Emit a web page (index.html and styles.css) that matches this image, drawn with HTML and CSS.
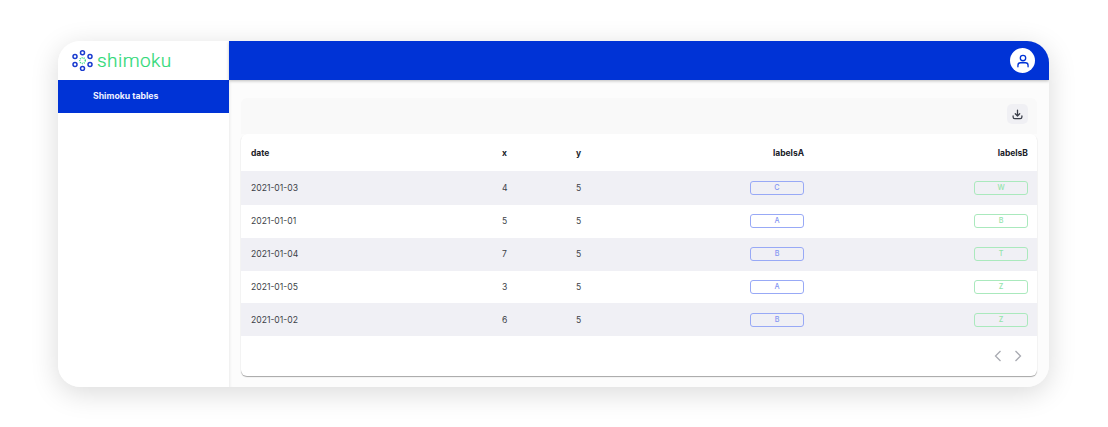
FILE: index.html
```html
<!DOCTYPE html>
<html lang="en">
<head>
<meta charset="utf-8">
<title>Shimoku tables</title>
<link rel="stylesheet" href="styles.css">
</head>
<body>
<div class="window">
  <aside class="sidebar">
    <div class="logo">
      <svg class="logo-mark" width="21" height="21" viewBox="0 0 21 21" fill="none">
        <g stroke="#1a3ccf" stroke-width="1.5">
          <circle cx="10.5" cy="2.8" r="2"/><circle cx="3" cy="6.6" r="2"/><circle cx="18" cy="6.6" r="2"/>
          <circle cx="3" cy="14.6" r="2"/><circle cx="18" cy="14.6" r="2"/><circle cx="10.5" cy="18.4" r="2"/>
        </g>
        <circle cx="10.5" cy="10.6" r="2.8" stroke="#3ddc84" stroke-width="1.5" stroke-dasharray="1 1"/>
      </svg>
      <span class="logo-text">shimoku</span>
    </div>
    <nav class="nav-item">Shimoku tables</nav>
  </aside>
  <div class="main">
    <header class="topbar">
      <div class="avatar">
        <svg width="14" height="14" viewBox="0 0 16 16" fill="none" stroke="#0033d6" stroke-width="1.5" stroke-linecap="round">
          <circle cx="8" cy="4.6" r="3.1"/>
          <path d="M2.2 14.6v-1.6c0-1.7 1.4-3 3-3h5.6c1.6 0 3 1.3 3 3v1.6"/>
        </svg>
      </div>
    </header>
    <main class="content">
      <div class="toolbar">
        <button class="download" type="button" aria-label="Download">
          <svg width="11" height="11" viewBox="0 0 12 12" fill="none" stroke="#3a3f4a" stroke-width="1.4" stroke-linecap="round" stroke-linejoin="round">
            <path d="M6 1.2v6.2M3.6 5.2 6 7.6l2.4-2.4"/>
            <path d="M1.2 7.6v1.2c0 1 .8 1.8 1.8 1.8h6c1 0 1.8-.8 1.8-1.8V7.6"/>
          </svg>
        </button>
      </div>
      <section class="card">
        <div class="row head">
          <div class="date">date</div><div class="x">x</div><div class="y">y</div><div class="a">labelsA</div><div class="b">labelsB</div>
        </div>
        <div class="row odd r1">
          <div class="date">2021-01-03</div><div class="x">4</div><div class="y">5</div>
          <div class="a"><span class="tag blue">C</span></div><div class="b"><span class="tag green">W</span></div>
        </div>
        <div class="row">
          <div class="date">2021-01-01</div><div class="x">5</div><div class="y">5</div>
          <div class="a"><span class="tag blue">A</span></div><div class="b"><span class="tag green">B</span></div>
        </div>
        <div class="row odd">
          <div class="date">2021-01-04</div><div class="x">7</div><div class="y">5</div>
          <div class="a"><span class="tag blue">B</span></div><div class="b"><span class="tag green">T</span></div>
        </div>
        <div class="row">
          <div class="date">2021-01-05</div><div class="x">3</div><div class="y">5</div>
          <div class="a"><span class="tag blue">A</span></div><div class="b"><span class="tag green">Z</span></div>
        </div>
        <div class="row odd">
          <div class="date">2021-01-02</div><div class="x">6</div><div class="y">5</div>
          <div class="a"><span class="tag blue">B</span></div><div class="b"><span class="tag green">Z</span></div>
        </div>
        <div class="pager">
          <svg width="8" height="12" viewBox="0 0 8 12" fill="none" stroke="#a9abb2" stroke-width="1.3"><path d="M6.5 1 1.5 6l5 5"/></svg>
          <svg width="8" height="12" viewBox="0 0 8 12" fill="none" stroke="#a9abb2" stroke-width="1.3"><path d="M1.5 1l5 5-5 5"/></svg>
        </div>
      </section>
    </main>
  </div>
</div>
</body>
</html>
```
FILE: styles.css
```css
* { box-sizing: border-box; }
html, body { margin: 0; height: 100%; background: #fff; }
body { font-family: Inter, "Liberation Sans", sans-serif; overflow: hidden; padding: 41px 59px 40px 58px; }
.window {
  display: flex;
  height: 346px;
  border-radius: 22px;
  overflow: hidden;
  background: #fcfcfc;
  box-shadow: 0 6px 28px rgba(0, 0, 0, .15);
}
.sidebar { width: 171px; flex: none; background: #fff; }
.logo { height: 39px; display: flex; align-items: center; padding-left: 14px; gap: 4px; }
.logo-mark { flex: none; }
.logo-text { font-family: Roboto, sans-serif; font-weight: 300; font-size: 19px; letter-spacing: .45px; color: #2fd977; line-height: 1; -webkit-text-stroke: .2px #2fd977; }
.nav-item {
  height: 33px;
  background: #0033d6;
  color: #eef0ff;
  font-size: 8.7px;
  font-weight: 700;
  padding: 11px 0 0 35px;
  line-height: 11px;
}
.main { flex: 1; min-width: 0; display: flex; flex-direction: column; }
.topbar {
  height: 39px;
  background: #0033d6;
  display: flex;
  align-items: center;
  justify-content: flex-end;
  padding-right: 14px;
  box-shadow: 0 1px 3px rgba(0, 0, 0, .25);
  position: relative;
}
.avatar { width: 25px; height: 25px; border-radius: 50%; background: #fff; display: flex; align-items: center; justify-content: center; }
.content { flex: 1; padding: 18px 12px 10px 12px; background: #fcfcfc; box-shadow: inset 3px 0 3px -2px rgba(0, 0, 0, .07); }
.toolbar { height: 36px; background: #f9f9f9; display: flex; justify-content: flex-end; align-items: flex-start; padding: 6px 9px 0 0; border-radius: 6px 6px 0 0; }
.download { width: 21px; height: 20px; padding: 0; border: 0; border-radius: 5px; background: #f0f0f4; display: flex; align-items: center; justify-content: center; }
.card { background: #fff; border-radius: 6px; box-shadow: 0 1px 1px rgba(0, 0, 0, .35); height: 242px; overflow: hidden; }
.row { display: grid; grid-template-columns: 251px 74px 40px 188px 1fr; height: 32.8px; align-items: center; font-size: 8.6px; color: #3c3f47; padding: 0 9px 0 10px; }
.row.head { height: 37px; font-size: 8.5px; font-weight: 700; color: #20222a; }
.row.r1 { height: 34px; }
.odd { background: #f0f0f5; }
.a, .b { text-align: right; }
.tag { display: inline-block; width: 54px; height: 14px; line-height: 12px; text-align: center; font-size: 7.2px; font-weight: 500; border-radius: 3px; border: 1px solid; vertical-align: middle; }
.blue { color: #8496f2; border-color: #98a9f6; background: #fff; }
.green { color: #93e4ab; border-color: #aae9bd; background: #fff; }
.odd .tag { background: transparent; }
.pager { display: flex; justify-content: flex-end; gap: 12px; padding: 14px 15px 0 0; }
```
